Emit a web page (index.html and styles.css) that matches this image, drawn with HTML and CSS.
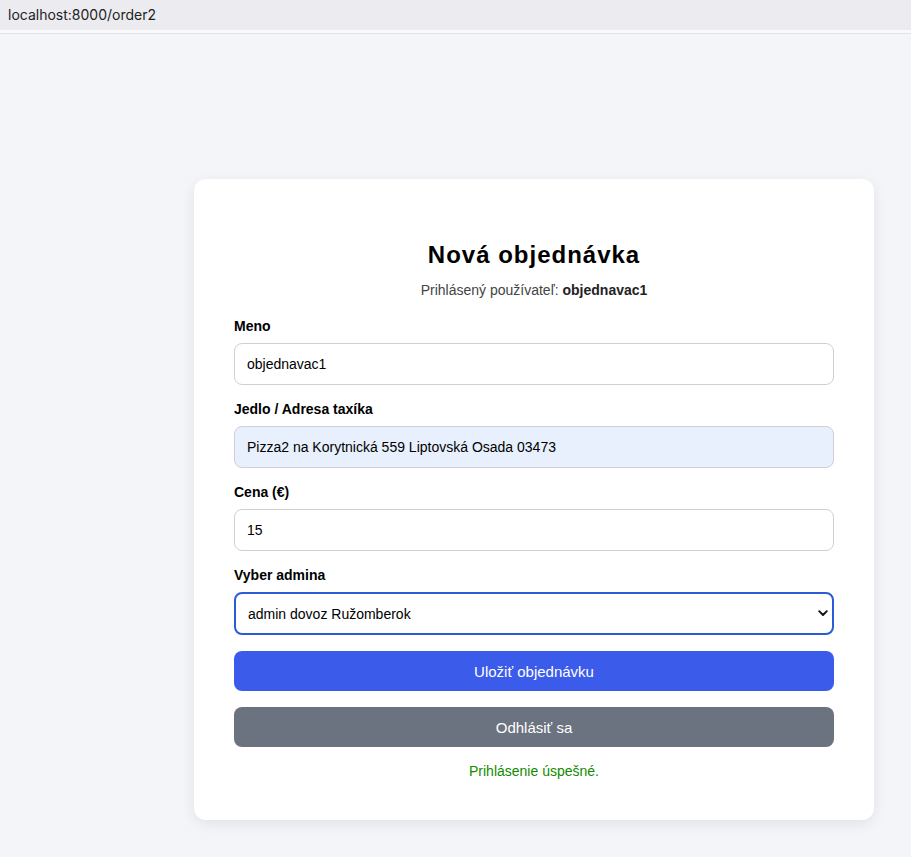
FILE: index.html
```html
<!DOCTYPE html>
<html lang="sk">
<head>
<meta charset="utf-8">
<title>Nová objednávka</title>
<link rel="stylesheet" href="styles.css">
</head>
<body>
<div class="topbar">localhost:8000/order2</div>
<div class="topbar-sep"></div>
<main class="page">
  <section class="card">
    <h1 class="title">Nová objednávka</h1>
    <p class="subtitle">Prihlásený používateľ: <strong>objednavac1</strong></p>
    <form class="form">
      <label class="label" for="meno">Meno</label>
      <input class="input" id="meno" type="text" value="objednavac1">
      <label class="label" for="jedlo">Jedlo / Adresa taxíka</label>
      <input class="input input-autofill" id="jedlo" type="text" value="Pizza2 na Korytnická 559 Liptovská Osada 03473">
      <label class="label" for="cena">Cena (€)</label>
      <input class="input" id="cena" type="text" value="15">
      <label class="label" for="admin">Vyber admina</label>
      <div class="select-wrap">
        <select class="select" id="admin">
          <option>admin dovoz Ružomberok</option>
        </select>
        <svg class="chevron" width="10" height="7" viewBox="0 0 10 7"><path d="M1.2 1.2 L5 5 L8.8 1.2" fill="none" stroke="#111" stroke-width="1.9" stroke-linecap="round" stroke-linejoin="round"/></svg>
      </div>
      <button class="btn btn-primary" type="button">Uložiť objednávku</button>
      <button class="btn btn-secondary" type="button">Odhlásiť sa</button>
      <p class="message">Prihlásenie úspešné.</p>
    </form>
  </section>
</main>
</body>
</html>
```
FILE: styles.css
```css
* { box-sizing: border-box; }
html, body { margin: 0; padding: 0; }
body {
  background: #f4f5f9;
  font-family: "Liberation Sans", Arial, sans-serif;
  color: #000;
  min-height: 857px;
}
.topbar {
  height: 30px;
  background: #ecebf0;
  font-family: Inter, "Liberation Sans", sans-serif;
  font-size: 14px;
  color: #222;
  padding-left: 8px;
  line-height: 30px;
}
.topbar-sep {
  height: 4px;
  background: #f9f9fb;
  border-bottom: 1px solid #e1e1e8;
}
.page {
  padding: 145px 0 0 194px;
}
.card {
  width: 680px;
  background: #fff;
  border-radius: 12px;
  box-shadow: 0 4px 14px rgba(0, 0, 0, 0.08);
  padding: 40px;
}
.title {
  margin: 22px 0 0;
  font-size: 24px;
  font-weight: bold;
  letter-spacing: 1px;
  text-align: center;
  line-height: 28px;
}
.subtitle {
  margin: 13px 0 19px;
  font-size: 14px;
  line-height: 17px;
  color: #444;
  text-align: center;
}
.subtitle strong { color: #222; }
.form { display: flex; flex-direction: column; }
.label {
  font-size: 14px;
  font-weight: bold;
  line-height: 17px;
  margin-bottom: 8px;
}
.input {
  height: 42px;
  border: 1px solid #cfcfd4;
  border-radius: 8px;
  padding: 0 12px;
  font-family: "Liberation Sans", Arial, sans-serif;
  font-size: 14px;
  color: #000;
  background: #fff;
  margin: 0 0 16px;
  outline: none;
}
.input-autofill { background: #e8f0fe; }
.select-wrap {
  position: relative;
  margin-bottom: 16px;
}
.select {
  width: 100%;
  height: 43px;
  appearance: none;
  -webkit-appearance: none;
  border: 2px solid #2b5cd6;
  border-radius: 8px;
  padding: 0 12px;
  font-family: "Liberation Sans", Arial, sans-serif;
  font-size: 14px;
  color: #000;
  background: #fff;
  outline: none;
}
.chevron {
  position: absolute;
  right: 6px;
  top: 18px;
}
.btn {
  height: 40px;
  border: none;
  border-radius: 8px;
  color: #fff;
  font-family: "Liberation Sans", Arial, sans-serif;
  font-size: 15px;
  cursor: pointer;
}
.btn-primary { background: #3b5beb; margin-bottom: 16px; }
.btn-secondary { background: #6b7280; }
.message {
  margin: 16px 0 0;
  font-size: 14px;
  line-height: 17px;
  color: #118a00;
  text-align: center;
}
```
